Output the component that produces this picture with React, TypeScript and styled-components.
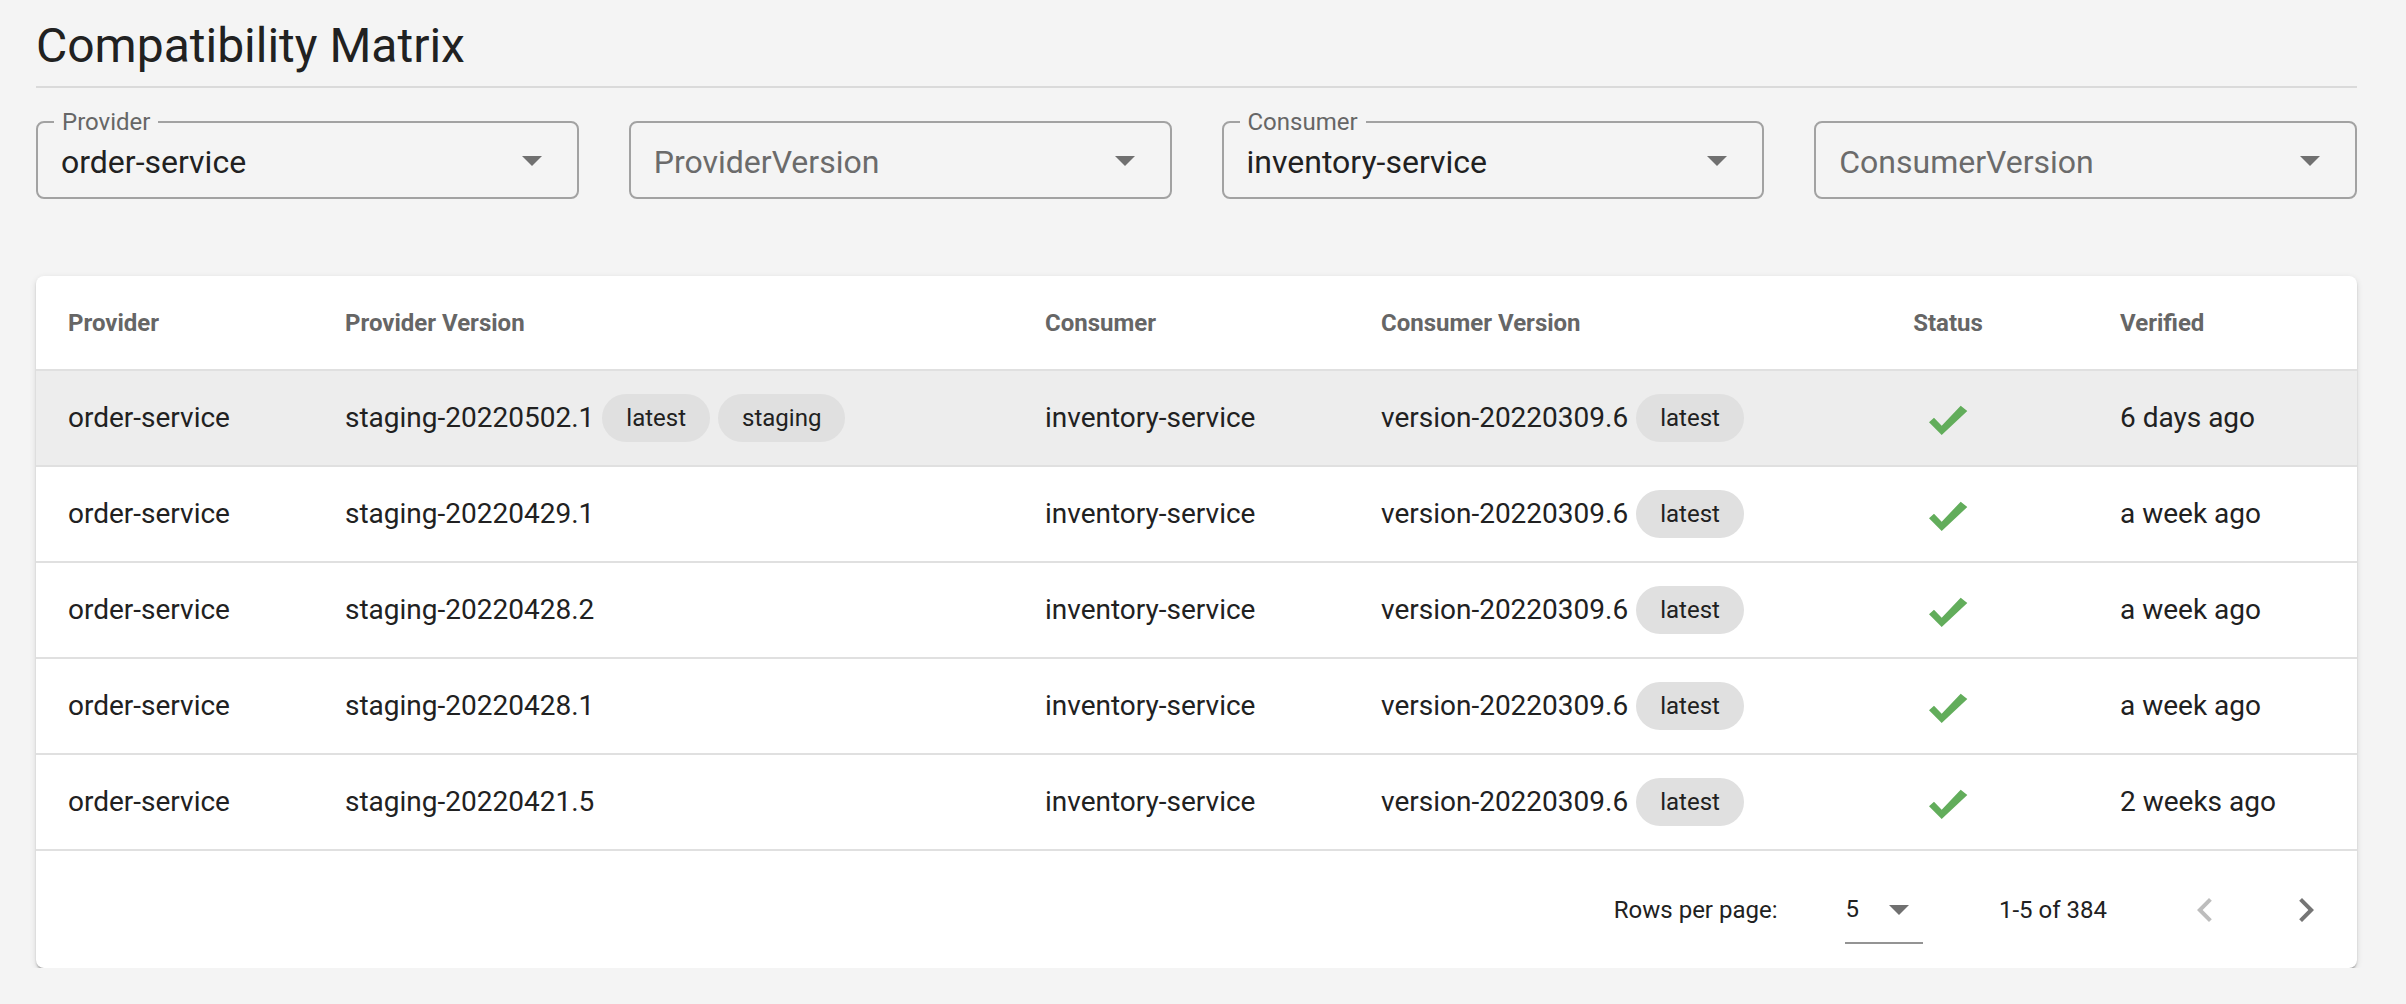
import styled, { createGlobalStyle } from 'styled-components';
import { MdArrowDropDown, MdChevronLeft, MdChevronRight } from 'react-icons/md';

const GlobalStyle = createGlobalStyle`
  * {
    box-sizing: border-box;
  }
  html,
  body {
    margin: 0;
    background: #f4f4f4;
  }
  body {
    font-family: Roboto, 'Liberation Sans', sans-serif;
    color: #212121;
  }
`;

const Page = styled.div`
  width: 2321px;
  margin-left: 36px;
  padding-top: 14px;
`;

const Title = styled.h1`
  margin: 0;
  font-size: 48px;
  line-height: 64px;
  font-weight: 400;
  color: #212121;
`;

const Divider = styled.hr`
  margin: 8px 0 0;
  border: 0;
  height: 2px;
  background: #dadada;
`;

const Filters = styled.div`
  display: grid;
  grid-template-columns: repeat(4, 1fr);
  column-gap: 50px;
  margin-top: 33px;
`;

const Field = styled.div`
  position: relative;
  height: 78px;
  display: flex;
  align-items: center;
  padding: 0 21px 0 23px;
  border: 2px solid #a2a2a2;
  border-radius: 8px;
  color: #707070;
`;

const FieldLabel = styled.span`
  position: absolute;
  top: -15px;
  left: 16px;
  padding: 0 8px;
  background: #f4f4f4;
  font-size: 24px;
  line-height: 28px;
  color: #666;
`;

const FieldValue = styled.span<{ $placeholder?: boolean }>`
  flex: 1;
  padding-top: 3px;
  font-size: 32px;
  line-height: 40px;
  color: ${({ $placeholder }) => ($placeholder ? '#6b6b6b' : '#212121')};
`;

const Card = styled.div`
  margin-top: 77px;
  background: #fff;
  border-radius: 8px;
  overflow: hidden;
  box-shadow: 0 4px 2px -2px rgba(0, 0, 0, 0.2), 0 2px 2px 0 rgba(0, 0, 0, 0.14),
    0 2px 6px 0 rgba(0, 0, 0, 0.12);
`;

const Row = styled.div<{ $head?: boolean; $highlight?: boolean }>`
  display: grid;
  grid-template-columns: 277px 700px 336px 459px 280px 269px;
  height: ${({ $head }) => ($head ? '95px' : '96px')};
  border-bottom: 2px solid #e0e0e0;
  background: ${({ $highlight }) => ($highlight ? '#ededed' : 'transparent')};
`;

const Cell = styled.div<{ $center?: boolean }>`
  display: flex;
  align-items: center;
  justify-content: ${({ $center }) => ($center ? 'center' : 'flex-start')};
  gap: 8px;
  padding: 0 32px;
  font-size: 28px;
  line-height: 40px;
  white-space: nowrap;
`;

const HeadCell = styled(Cell)`
  font-size: 24px;
  font-weight: 700;
  color: #666;
`;

const Chip = styled.span`
  display: inline-flex;
  align-items: center;
  height: 48px;
  padding: 0 24px;
  border-radius: 24px;
  background: #e0e0e0;
  font-size: 24px;
  color: #212121;
`;

const CheckMark = styled.svg`
  width: 40px;
  height: 32px;
  margin-top: 3px;
  fill: #62ad5b;
`;

const Footer = styled.div`
  display: flex;
  align-items: center;
  justify-content: flex-end;
  height: 117px;
  padding-right: 3px;
  font-size: 24px;
  line-height: 28px;
  color: #212121;
`;

const RowsLabel = styled.span`
  margin-right: 68px;
`;

const RowsSelect = styled.div`
  display: flex;
  align-items: center;
  gap: 16px;
  padding: 20px 0 19px;
  border-bottom: 2px solid #949494;
  margin-right: 76px;
  color: #212121;

  svg {
    margin: -10px 0;
    color: #707070;
  }
`;

const Actions = styled.div`
  display: flex;
  gap: 5px;
  margin-left: 50px;
`;

const PageButton = styled.button<{ disabled?: boolean }>`
  display: flex;
  align-items: center;
  justify-content: center;
  width: 96px;
  height: 96px;
  padding: 0;
  border: 0;
  border-radius: 50%;
  background: transparent;
  color: ${({ disabled }) => (disabled ? '#bdbdbd' : '#757575')};
  cursor: ${({ disabled }) => (disabled ? 'default' : 'pointer')};
`;

type Match = {
  provider: string;
  providerVersion: string;
  providerTags: string[];
  consumer: string;
  consumerVersion: string;
  consumerTags: string[];
  verified: string;
};

const rows: Match[] = [
  {
    provider: 'order-service',
    providerVersion: 'staging-20220502.1',
    providerTags: ['latest', 'staging'],
    consumer: 'inventory-service',
    consumerVersion: 'version-20220309.6',
    consumerTags: ['latest'],
    verified: '6 days ago',
  },
  {
    provider: 'order-service',
    providerVersion: 'staging-20220429.1',
    providerTags: [],
    consumer: 'inventory-service',
    consumerVersion: 'version-20220309.6',
    consumerTags: ['latest'],
    verified: 'a week ago',
  },
  {
    provider: 'order-service',
    providerVersion: 'staging-20220428.2',
    providerTags: [],
    consumer: 'inventory-service',
    consumerVersion: 'version-20220309.6',
    consumerTags: ['latest'],
    verified: 'a week ago',
  },
  {
    provider: 'order-service',
    providerVersion: 'staging-20220428.1',
    providerTags: [],
    consumer: 'inventory-service',
    consumerVersion: 'version-20220309.6',
    consumerTags: ['latest'],
    verified: 'a week ago',
  },
  {
    provider: 'order-service',
    providerVersion: 'staging-20220421.5',
    providerTags: [],
    consumer: 'inventory-service',
    consumerVersion: 'version-20220309.6',
    consumerTags: ['latest'],
    verified: '2 weeks ago',
  },
];

const filters = [
  { label: 'Provider', value: 'order-service' },
  { label: '', value: 'ProviderVersion' },
  { label: 'Consumer', value: 'inventory-service' },
  { label: '', value: 'ConsumerVersion' },
];

// heavy check mark as drawn by the status column
const Check = () => (
  <CheckMark viewBox="0 0 40 32">
    <polygon points="1,18.3 13.7,31 39.3,7 32.7,1.7 13.7,21.7 6,13.7" />
  </CheckMark>
);

export default function App() {
  return (
    <>
      <GlobalStyle />
      <Page>
        <Title>Compatibility Matrix</Title>
        <Divider />
        <Filters>
          {filters.map((f) => (
            <Field key={f.value}>
              {f.label && <FieldLabel>{f.label}</FieldLabel>}
              <FieldValue $placeholder={!f.label}>{f.value}</FieldValue>
              <MdArrowDropDown size={48} />
            </Field>
          ))}
        </Filters>
        <Card>
          <Row $head>
            <HeadCell>Provider</HeadCell>
            <HeadCell>Provider Version</HeadCell>
            <HeadCell>Consumer</HeadCell>
            <HeadCell>Consumer Version</HeadCell>
            <HeadCell $center>Status</HeadCell>
            <HeadCell>Verified</HeadCell>
          </Row>
          {rows.map((r, i) => (
            <Row key={r.providerVersion} $highlight={i === 0}>
              <Cell>{r.provider}</Cell>
              <Cell>
                {r.providerVersion}
                {r.providerTags.map((t) => (
                  <Chip key={t}>{t}</Chip>
                ))}
              </Cell>
              <Cell>{r.consumer}</Cell>
              <Cell>
                {r.consumerVersion}
                {r.consumerTags.map((t) => (
                  <Chip key={t}>{t}</Chip>
                ))}
              </Cell>
              <Cell $center>
                <Check />
              </Cell>
              <Cell>{r.verified}</Cell>
            </Row>
          ))}
          <Footer>
            <RowsLabel>Rows per page:</RowsLabel>
            <RowsSelect>
              <span>5</span>
              <MdArrowDropDown size={48} />
            </RowsSelect>
            <span>1-5 of 384</span>
            <Actions>
              <PageButton disabled aria-label="previous page">
                <MdChevronLeft size={48} />
              </PageButton>
              <PageButton aria-label="next page">
                <MdChevronRight size={48} />
              </PageButton>
            </Actions>
          </Footer>
        </Card>
      </Page>
    </>
  );
}
